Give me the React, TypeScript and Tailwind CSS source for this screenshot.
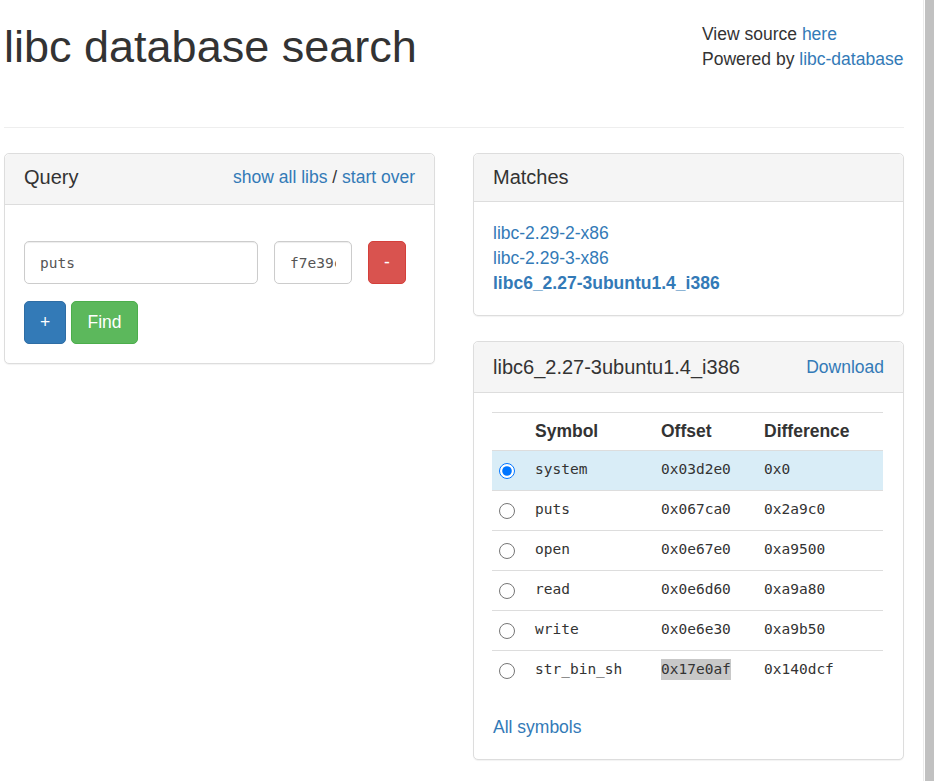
import React from "react";

const rows = [
  { sym: "system", off: "0x03d2e0", diff: "0x0", checked: true },
  { sym: "puts", off: "0x067ca0", diff: "0x2a9c0" },
  { sym: "open", off: "0x0e67e0", diff: "0xa9500" },
  { sym: "read", off: "0x0e6d60", diff: "0xa9a80" },
  { sym: "write", off: "0x0e6e30", diff: "0xa9b50" },
  { sym: "str_bin_sh", off: "0x17e0af", diff: "0x140dcf", sel: true },
];

export default function App() {
  return (
    <div className="flex h-[781px] w-[934px] overflow-hidden bg-white font-['Liberation_Sans',Arial,sans-serif] text-[17.5px] leading-[25px] text-[#333]">
      <div className="w-[923px] shrink-0 pl-[4px] pr-[19px]">
        {/* Header */}
        <div className="flex h-[128px] items-start justify-between border-b border-[#eee]">
          <h1 className="mt-[22px] text-[45px] leading-[49.5px] font-normal text-[#333]">
            libc database search
          </h1>
          <div className="mt-[22px] w-[202px]">
            <div>
              View source <a className="text-[#337ab7]">here</a>
            </div>
            <div>
              Powered by <a className="text-[#337ab7]">libc-database</a>
            </div>
          </div>
        </div>

        <div className="mt-[25px] grid grid-cols-2 gap-[38px]">
          {/* Query panel */}
          <div className="self-start rounded-[5px] border border-[#ddd] bg-white shadow-[0_1px_1px_rgba(0,0,0,0.05)]">
            <div className="flex items-center justify-between rounded-t-[5px] border-b border-[#ddd] bg-[#f5f5f5] px-[19px] pt-[10.5px] pb-[14.5px]">
              <span className="text-[20px] leading-[25px]">Query</span>
              <span>
                <a className="text-[#337ab7]">show all libs</a> /{" "}
                <a className="text-[#337ab7]">start over</a>
              </span>
            </div>
            <div className="px-[19px] pt-[36px] pb-[19px]">
              <div className="flex gap-[16px]">
                <input
                  readOnly
                  value="puts"
                  className="h-[43px] w-[234px] rounded-[5px] border border-[#ccc] px-[15px] font-['DejaVu_Sans_Mono',monospace] text-[14.5px] text-[#555] shadow-[inset_0_1px_1px_rgba(0,0,0,0.075)] outline-none"
                />
                <input
                  readOnly
                  value="f7e39ca0"
                  className="h-[43px] w-[78px] rounded-[5px] border border-[#ccc] px-[15px] font-['DejaVu_Sans_Mono',monospace] text-[14.5px] text-[#555] shadow-[inset_0_1px_1px_rgba(0,0,0,0.075)] outline-none"
                />
                <button className="h-[43px] w-[38px] rounded-[5px] border border-[#d43f3a] bg-[#d9534f] text-white">
                  -
                </button>
              </div>
              <div className="mt-[17px] flex gap-[5px]">
                <button className="h-[43px] w-[42px] rounded-[5px] border border-[#2e6da4] bg-[#337ab7] text-white">
                  +
                </button>
                <button className="h-[43px] w-[67px] rounded-[5px] border border-[#4cae4c] bg-[#5cb85c] text-white">
                  Find
                </button>
              </div>
            </div>
          </div>

          {/* Right column */}
          <div className="flex flex-col">
            <div className="rounded-[5px] border border-[#ddd] bg-white shadow-[0_1px_1px_rgba(0,0,0,0.05)]">
              <div className="rounded-t-[5px] border-b border-[#ddd] bg-[#f5f5f5] px-[19px] pt-[11.5px] pb-[13.5px]">
                <span className="block text-[20px] leading-[22px]">Matches</span>
              </div>
              <div className="px-[19px] pt-[19px] pb-[19px]">
                <div>
                  <a className="text-[#337ab7]">libc-2.29-2-x86</a>
                </div>
                <div>
                  <a className="text-[#337ab7]">libc-2.29-3-x86</a>
                </div>
                <div>
                  <a className="font-bold text-[#337ab7]">libc6_2.27-3ubuntu1.4_i386</a>
                </div>
              </div>
            </div>

            <div className="mt-[25px] rounded-[5px] border border-[#ddd] bg-white shadow-[0_1px_1px_rgba(0,0,0,0.05)]">
              <div className="flex items-center justify-between rounded-t-[5px] border-b border-[#ddd] bg-[#f5f5f5] px-[19px] py-[12.5px]">
                <span className="text-[20px] leading-[25px]">libc6_2.27-3ubuntu1.4_i386</span>
                <a className="text-[#337ab7]">Download</a>
              </div>
              <div className="pl-[18px] pr-[20px] pt-[19px] pb-[19px]">
                <div className="grid h-[39px] grid-cols-[43px_126px_103px_1fr] items-center border-y border-[#ddd] font-bold">
                  <div />
                  <div>Symbol</div>
                  <div>Offset</div>
                  <div>Difference</div>
                </div>
                {rows.map((r, i) => (
                  <div
                    key={r.sym}
                    className={
                      "grid grid-cols-[43px_126px_103px_1fr] items-center font-['DejaVu_Sans_Mono',monospace] text-[14.5px] " +
                      (i === 0 ? "h-[39px] bg-[#d9edf7]" : "h-[40px] border-t border-[#ddd]")
                    }
                  >
                    <div className="flex items-center pl-[7px]">
                      <input
                        type="radio"
                        name="sym"
                        defaultChecked={!!r.checked}
                        className="m-0 h-4 w-4 accent-[#0075ff]"
                      />
                    </div>
                    <div className="pb-[2px]">{r.sym}</div>
                    <div className="pb-[2px]">
                      {r.sel ? (
                        <span className="inline-block bg-[#c8c8c8] leading-[21px]">{r.off}</span>
                      ) : (
                        r.off
                      )}
                    </div>
                    <div className="pb-[2px]">{r.diff}</div>
                  </div>
                ))}
                <div className="mt-[25px] pl-[1px]">
                  <a className="text-[#337ab7]">All symbols</a>
                </div>
              </div>
            </div>
          </div>
        </div>
      </div>
      {/* scrollbar */}
      <div className="flex w-[11px] shrink-0 border-l border-[#ebebeb] pl-[1px]">
        <div className="flex-1 bg-[#c1c1c1]" />
      </div>
    </div>
  );
}
